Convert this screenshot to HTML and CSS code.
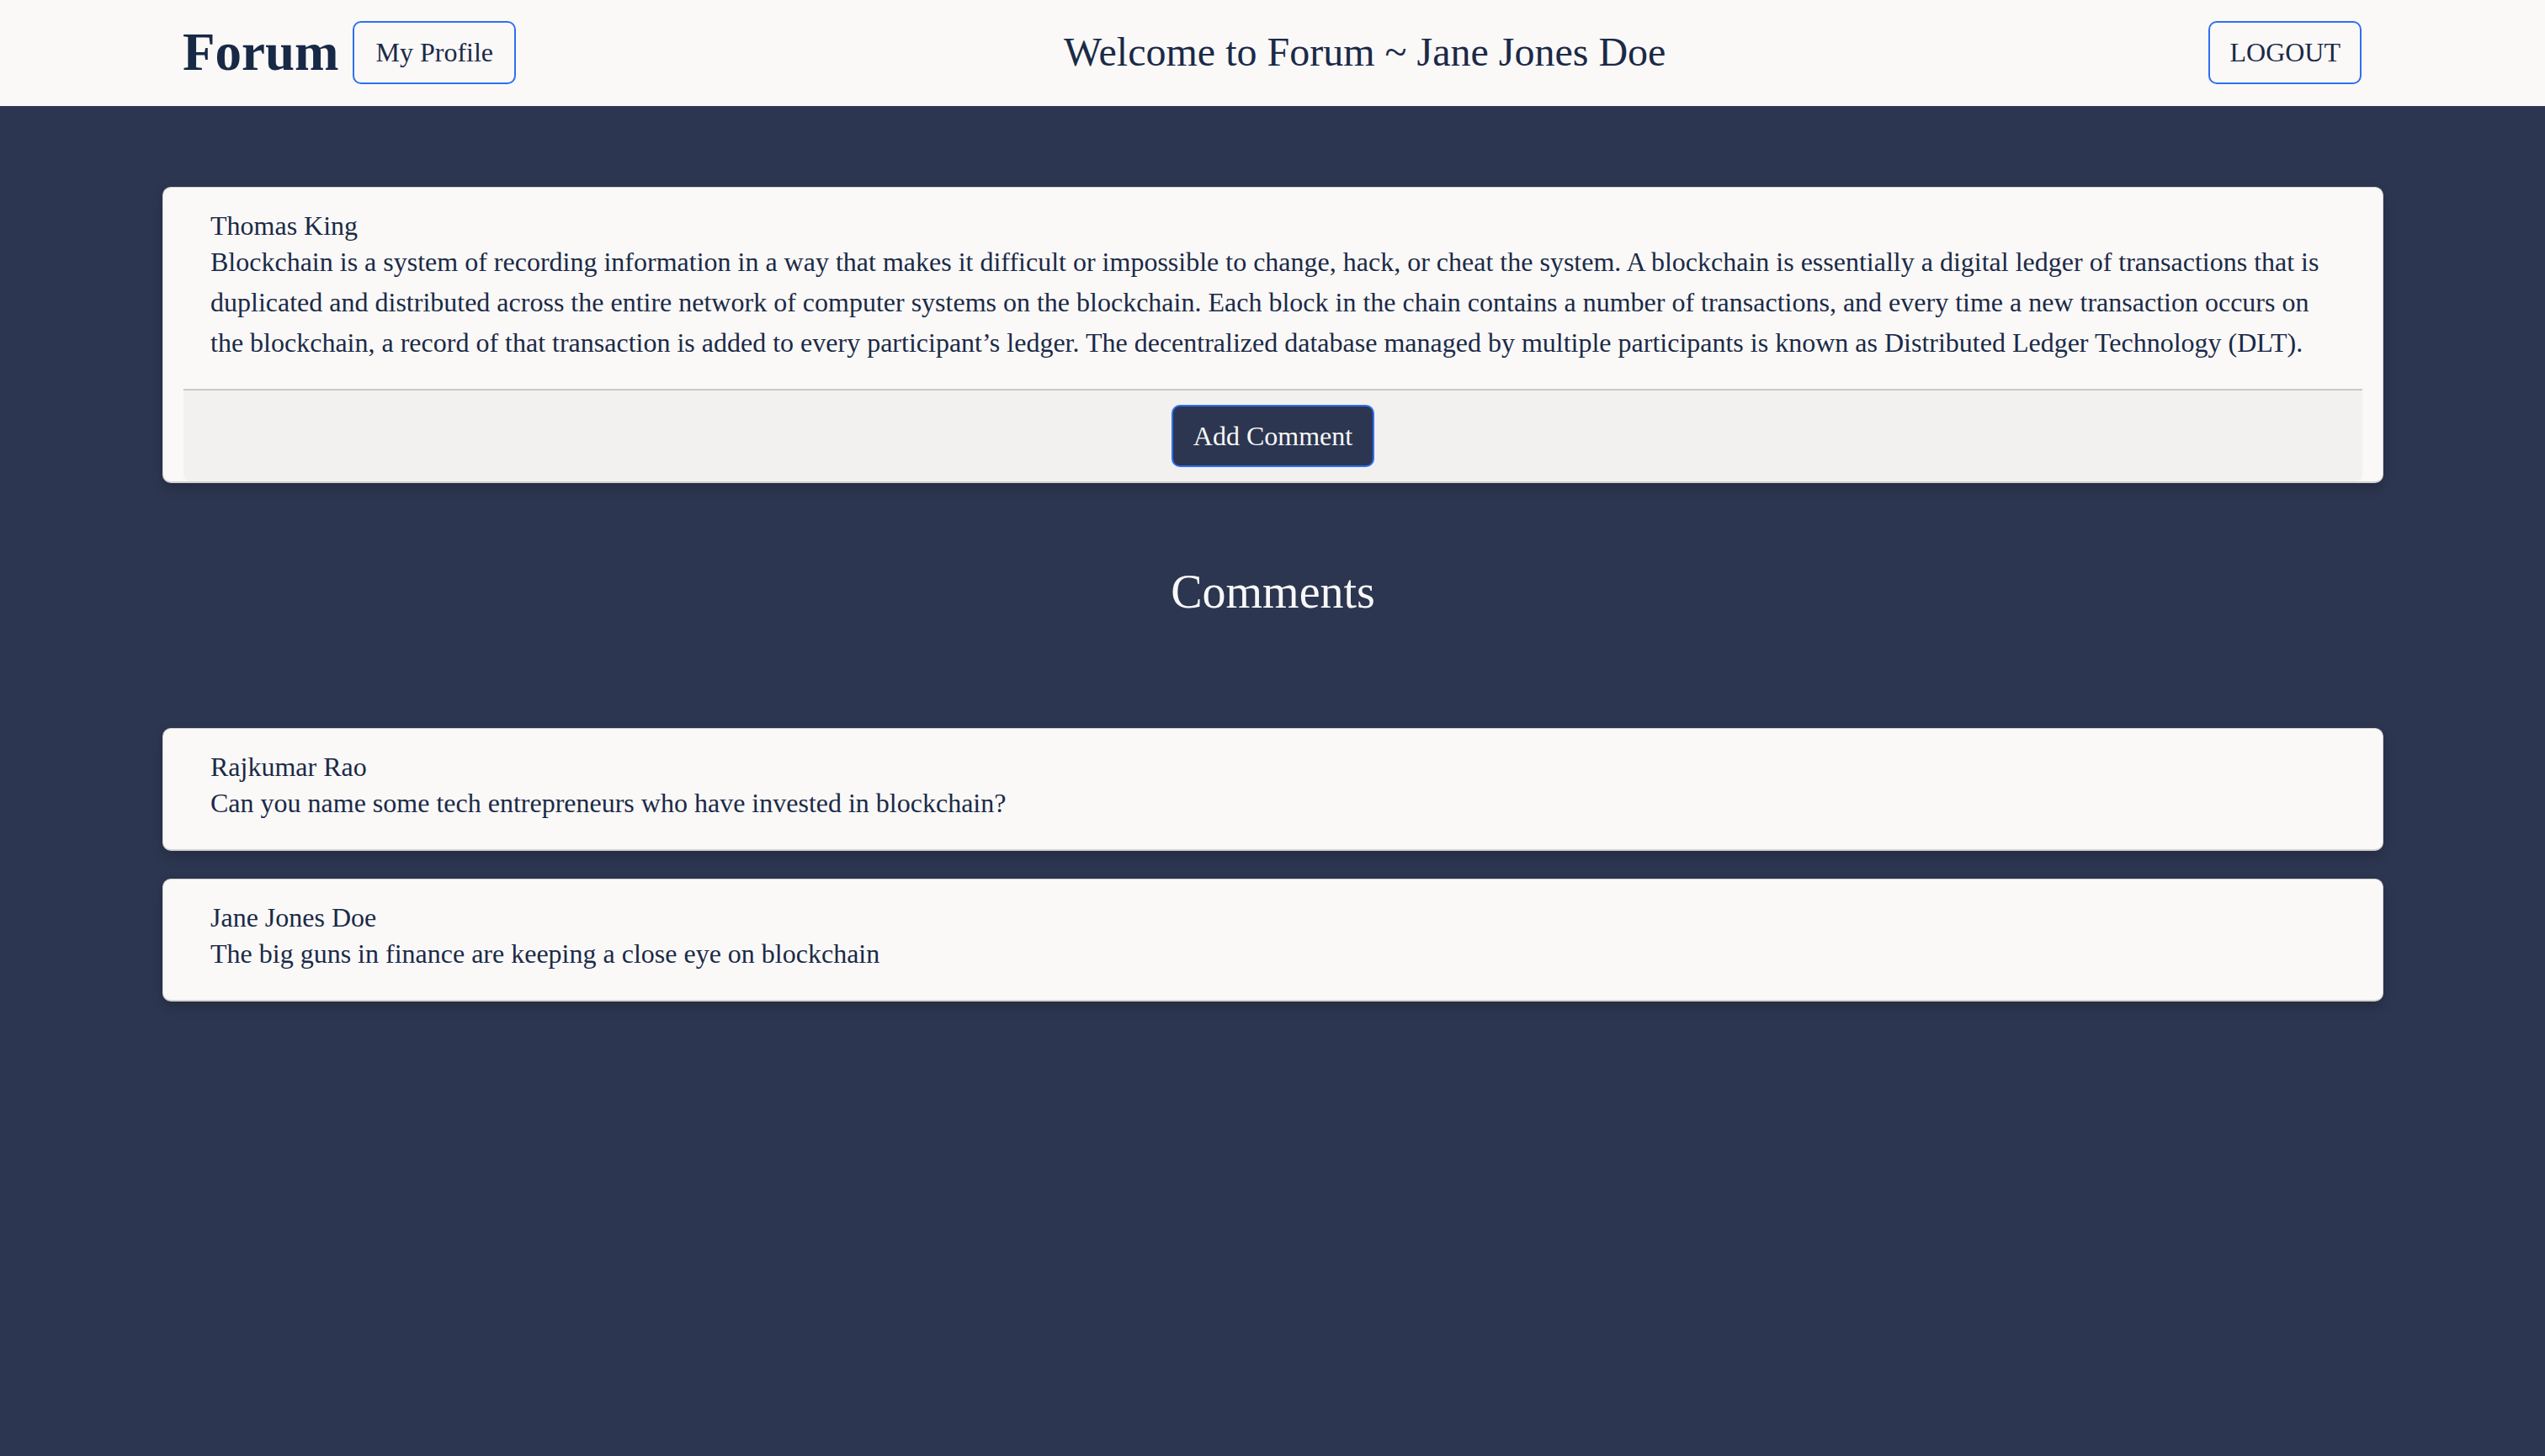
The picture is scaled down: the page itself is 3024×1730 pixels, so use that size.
FILE: index.html
```html
<!DOCTYPE html>
<html lang="en">
<head>
<meta charset="utf-8">
<title>Forum</title>
<link rel="stylesheet" href="styles.css">
</head>
<body>
<header class="topbar">
  <div class="brand">
    <span class="logo">Forum</span>
    <button class="outline-btn">My Profile</button>
  </div>
  <h1 class="welcome">Welcome to Forum ~ Jane Jones Doe</h1>
  <button class="outline-btn logout">LOGOUT</button>
</header>
<main class="content">
  <section class="card">
    <div class="card-body">
      <div class="author">Thomas King</div>
      <p class="text">Blockchain is a system of recording information in a way that makes it difficult or impossible to change, hack, or cheat the system. A blockchain is essentially a digital ledger of transactions that is duplicated and distributed across the entire network of computer systems on the blockchain. Each block in the chain contains a number of transactions, and every time a new transaction occurs on the blockchain, a record of that transaction is added to every participant’s ledger. The decentralized database managed by multiple participants is known as Distributed Ledger Technology (DLT).</p>
    </div>
    <div class="card-footer">
      <button class="solid-btn">Add Comment</button>
    </div>
  </section>
  <h2 class="section-title">Comments</h2>
  <div class="comments">
    <section class="card">
      <div class="card-body">
        <div class="author">Rajkumar Rao</div>
        <p class="text">Can you name some tech entrepreneurs who have invested in blockchain?</p>
      </div>
    </section>
    <section class="card">
      <div class="card-body">
        <div class="author">Jane Jones Doe</div>
        <p class="text">The big guns in finance are keeping a close eye on blockchain</p>
      </div>
    </section>
  </div>
</main>
</body>
</html>
```
FILE: styles.css
```css
* { box-sizing: border-box; }
html, body {
  margin: 0;
  padding: 0;
}
body {
  background: #2d3650;
  font-family: "Liberation Serif", "Times New Roman", serif;
  color: #1b2a47;
  min-height: 1730px;
}
.topbar {
  height: 126px;
  background: #faf9f8;
  display: flex;
  align-items: center;
  justify-content: space-between;
  padding: 0 218px 2px 217px;
}
.brand {
  display: flex;
  align-items: center;
  gap: 17px;
}
.logo {
  font-weight: bold;
  font-size: 63px;
  color: #172945;
  line-height: 1;
  margin-top: 1px;
}
.welcome {
  margin: 0 0 0 6px;
  font-weight: normal;
  font-size: 48px;
  color: #1b2a47;
  line-height: 1.15;
}
.outline-btn {
  font-family: "Liberation Serif", "Times New Roman", serif;
  font-size: 32px;
  color: #1b2a47;
  background: #faf9f8;
  border: 2px solid #2f6ff2;
  border-radius: 10px;
  padding: 17px 25px;
  line-height: 37px;
  height: 75px;
}
.logout {
  padding: 17px 23px;
}
.content {
  padding: 96px 192px 0 193px;
}
.card {
  background: #faf9f8;
  border: 1px solid #d2d2d2;
  border-bottom-width: 2px;
  border-radius: 10px;
  padding: 0 24px;
  box-shadow: 0 6px 14px rgba(0, 0, 0, 0.18);
}
.card-body {
  padding: 27px 32px 31px 32px;
}
.author {
  font-size: 32px;
  line-height: 37px;
}
.text {
  margin: 0;
  font-size: 32px;
  line-height: 48px;
}
.card-footer {
  background: #f2f1f0;
  border-top: 2px solid #c9c9c9;
  border-radius: 0 0 8px 8px;
  padding: 17px 0 17px;
  display: flex;
  justify-content: center;
}
.solid-btn {
  font-family: "Liberation Serif", "Times New Roman", serif;
  font-size: 32px;
  color: #f8f8f8;
  background: #2d3650;
  border: 2px solid #2f6ff2;
  border-radius: 10px;
  padding: 17px 24px;
  line-height: 37px;
  height: 74px;
}
.section-title {
  margin: 97px 0 0 0;
  text-align: center;
  font-weight: normal;
  font-size: 56px;
  line-height: 64px;
  color: #f8f8f8;
}
.comments {
  margin-top: 130px;
  display: flex;
  flex-direction: column;
  gap: 33px;
}
```
